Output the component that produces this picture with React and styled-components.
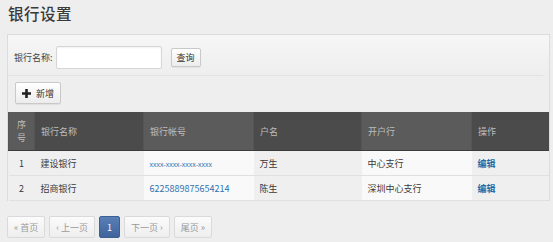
import styled, { createGlobalStyle } from 'styled-components';

const GlobalStyle = createGlobalStyle`
	html, body {
		margin: 0;
		padding: 0;
		background: #eeeeee;
	}
	body {
		font-family: "Noto Sans CJK SC", "Liberation Sans", sans-serif;
		font-size: 9px;
		color: #333;
	}
`;

const Page = styled.div`
	width: 553px;
	height: 242px;
	box-sizing: border-box;
	padding: 0 3px 0 7px;
	overflow: hidden;
`;

const Title = styled.h1`
	margin: 0;
	padding: 2px 0 0 1px;
	height: 34px;
	box-sizing: border-box;
	font-size: 15.5px;
	font-weight: 500;
	color: #3a3a3a;
	line-height: 22px;
	letter-spacing: 0.5px;
`;

const Panel = styled.div`
	border: 1px solid #dcdcdc;
	border-bottom: none;
	background: linear-gradient(#f6f6f6, #eeeeee 40px);
`;

const SearchRow = styled.div`
	display: flex;
	align-items: center;
	padding: 11px 6px 6px;
	border-bottom: 1px solid #e3e3e3;
	margin: 0 6px 0 0;
`;

const Label = styled.label`
	font-size: 9px;
	color: #444;
	margin-right: 3px;
`;

const Input = styled.input`
	width: 106px;
	height: 23px;
	box-sizing: border-box;
	border: 1px solid #d6d6d6;
	border-radius: 2px;
	background: #fff;
	margin-right: 9px;
	box-shadow: inset 0 1px 2px rgba(0, 0, 0, 0.06);
`;

const Button = styled.button`
	display: flex;
	align-items: center;
	gap: 5px;
	height: ${(p) => p.$h || 19}px;
	padding: 0 ${(p) => p.$px || 6}px;
	border: 1px solid #c9c9c9;
	border-radius: 2px;
	background: linear-gradient(#ffffff, #ececec);
	font-family: inherit;
	font-size: 9px;
	color: #333;
	box-shadow: 0 1px 1px rgba(0, 0, 0, 0.06);
`;

const ToolRow = styled.div`
	padding: 6px 7px 8px;
`;

const Table = styled.table`
	width: 100%;
	border-collapse: collapse;
	table-layout: fixed;
`;

const Th = styled.th`
	height: 38px;
	padding: 0 6px;
	text-align: ${(p) => (p.$center ? 'center' : 'left')};
	font-weight: normal;
	font-size: 9px;
	line-height: 13px;
	color: #bdbdbd;
	background: ${(p) => (p.$light ? '#5b5b5b' : '#4b4b4b')};
	border-left: 1px solid #555;
	border-bottom: 1px solid #3c3c3c;
`;

const Td = styled.td`
	height: 24px;
	padding: 0 6px;
	text-align: ${(p) => (p.$center ? 'center' : 'left')};
	font-size: 9px;
	color: #3a3a3a;
	background: ${(p) => (p.$light ? '#f9f9f9' : '#efefef')};
	border-bottom: 1px solid #e0e0e0;
`;

const Link = styled.a`
	color: ${(p) => (p.$bold ? '#1f6aa5' : '#2f72b0')};
	font-size: ${(p) => p.$size || 9}px;
	font-weight: ${(p) => (p.$bold ? 600 : 400)};
	text-decoration: none;
`;

const Pager = styled.div`
	display: flex;
	gap: 4px;
	margin-top: 15px;
`;

const PageBtn = styled.span`
	height: 22px;
	box-sizing: border-box;
	padding: 0 ${(p) => p.$px || 6}px;
	display: flex;
	align-items: center;
	border: 1px solid ${(p) => (p.$active ? '#3d5f92' : '#dadada')};
	border-radius: 2px;
	font-size: 9px;
	color: ${(p) => (p.$active ? '#fff' : '#999')};
	background: ${(p) =>
		p.$active ? 'linear-gradient(#5a7fb6, #3f649c)' : 'linear-gradient(#fbfbfb, #eeeeee)'};
`;

const rows = [
	{ id: 1, name: '建设银行', account: 'xxxx-xxxx-xxxx-xxxx', small: true, owner: '万生', branch: '中心支行' },
	{ id: 2, name: '招商银行', account: '6225889875654214', owner: '陈生', branch: '深圳中心支行' },
];

const PlusIcon = () => (
	<svg width="9" height="9" viewBox="0 0 9 9">
		<path d="M3.2 0h2.6v3.2H9v2.6H5.8V9H3.2V5.8H0V3.2h3.2z" fill="#222" />
	</svg>
);

export default function App() {
	return (
		<Page>
			<GlobalStyle />
			<Title>银行设置</Title>
			<Panel>
				<SearchRow>
					<Label>银行名称:</Label>
					<Input />
					<Button $px={5}>查询</Button>
				</SearchRow>
				<ToolRow>
					<Button $h={22} $px={6}>
						<PlusIcon />
						新增
					</Button>
				</ToolRow>
				<Table>
					<colgroup>
						<col style={{ width: 26 }} />
						<col style={{ width: 109 }} />
						<col style={{ width: 110 }} />
						<col style={{ width: 108 }} />
						<col style={{ width: 110 }} />
						<col />
					</colgroup>
					<thead>
						<tr>
							<Th $center $light>序号</Th>
							<Th>银行名称</Th>
							<Th $light>银行帐号</Th>
							<Th>户名</Th>
							<Th $light>开户行</Th>
							<Th>操作</Th>
						</tr>
					</thead>
					<tbody>
						{rows.map((r) => (
							<tr key={r.id}>
								<Td $center>{r.id}</Td>
								<Td>{r.name}</Td>
								<Td $light>
									<Link $size={r.small ? 7 : 9}>{r.account}</Link>
								</Td>
								<Td>{r.owner}</Td>
								<Td $light>{r.branch}</Td>
								<Td>
									<Link $bold>编辑</Link>
								</Td>
							</tr>
						))}
					</tbody>
				</Table>
			</Panel>
			<Pager>
				<PageBtn>« 首页</PageBtn>
				<PageBtn>‹ 上一页</PageBtn>
				<PageBtn $active $px={7}>1</PageBtn>
				<PageBtn>下一页 ›</PageBtn>
				<PageBtn>尾页 »</PageBtn>
			</Pager>
		</Page>
	);
}
